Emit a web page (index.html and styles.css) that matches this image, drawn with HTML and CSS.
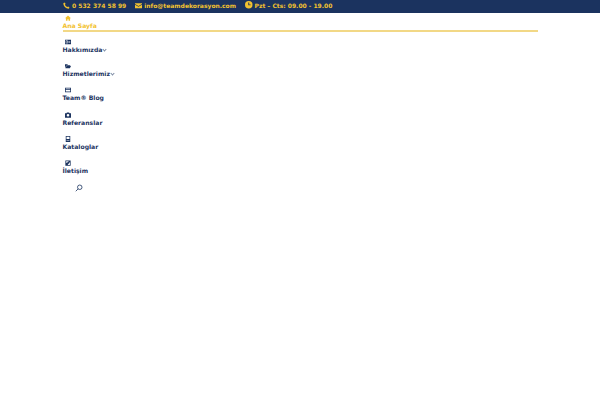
FILE: index.html
```html
<!DOCTYPE html>
<html lang="tr">
<head>
    <meta charset="UTF-8">
    <title>Team Dekorasyon</title>
    <link rel="stylesheet" href="styles.css">
</head>
<body>
    <!-- Top bar -->
    <div class="top-bar">
        <div class="container top-info">
            <span class="info-item">
                <svg class="info-icon" viewBox="0 0 16 16"><path d="M3 1l3 3-1.500 2.500c1 2 3 4 5 5L12 10l3 3-2 2.500C7 15.500 .5 9 .8 3z"/></svg>
                0 532 374 58 99
            </span>
            <span class="info-item">
                <svg class="info-icon" viewBox="0 0 16 16"><path d="M0 3h16v1.500L8 9 0 4.500z"/><path d="M0 6.500L8 11l8-4.500V14H0z"/></svg>
                info@teamdekorasyon.com
            </span>
            <span class="info-item">
                <svg class="info-icon clock" viewBox="0 0 16 16"><path fill-rule="evenodd" d="M8 0a8 8 0 1 1 0 16A8 8 0 0 1 8 0zM7 3v6h5V7.500H9V3z"/></svg>
                Pzt – Cts: 09.00 - 19.00
            </span>
        </div>
    </div>

    <!-- Main menu -->
    <nav class="container main-nav">
        <ul class="menu">
            <li class="menu-item active">
                <svg class="menu-icon" viewBox="0 0 16 16"><path d="M8 1L0 8.500h2.500V15h4v-4h3v4h4V8.500H16z"/></svg>
                <a href="#">Ana Sayfa</a>
            </li>
            <li class="menu-item">
                <svg class="menu-icon" viewBox="0 0 16 16"><path fill-rule="evenodd" d="M0 2h16v12H0zM2 4v8h5V4zm7 1v1.500h5V5zm0 3v1.500h5V8zM3 9.500h3V11H3zM3.500 5.500h2v3h-2z"/></svg>
                <a href="#">Hakkımızda</a><span class="caret"></span>
            </li>
            <li class="menu-item">
                <svg class="menu-icon" viewBox="0 0 16 16"><path d="M0 3h6l2 2h6v2H3L0 13zM4 8h12l-3 6H1z"/></svg>
                <a href="#">Hizmetlerimiz</a><span class="caret"></span>
            </li>
            <li class="menu-item">
                <svg class="menu-icon" viewBox="0 0 16 16"><path fill-rule="evenodd" d="M0 2h16v12H0zM2 4v1.500h12V4zm0 3.500V12h12V7.500z"/></svg>
                <a href="#">Team® Blog</a>
            </li>
            <li class="menu-item">
                <svg class="menu-icon" viewBox="0 0 16 16"><path fill-rule="evenodd" d="M5 1h6l1 2h4v12H0V3h4zm3 4a3.500 3.500 0 1 0 0 7 3.500 3.500 0 0 0 0-7z"/></svg>
                <a href="#">Referanslar</a>
            </li>
            <li class="menu-item">
                <svg class="menu-icon" viewBox="0 0 16 16"><path fill-rule="evenodd" d="M2 0h12v16H2zM4 2v6h8V2zm0 9v1.500h8V11z"/></svg>
                <a href="#">Kataloglar</a>
            </li>
            <li class="menu-item">
                <svg class="menu-icon" viewBox="0 0 16 16"><path fill-rule="evenodd" d="M1 1h14v14H1zM3 3v4h4l-1-1 5-3zm10 2L7 13h6z"/></svg>
                <a href="#">İletişim</a>
            </li>
        </ul>
        <button class="search-btn" aria-label="Ara">
            <svg viewBox="0 0 16 16"><circle cx="9.500" cy="6.500" r="4.500"/><path d="M6.300 9.700L1.500 14.500"/></svg>
        </button>
    </nav>
</body>
</html>
```

FILE: styles.css
```css
:root {
    --navy: #1b335f;
    --yellow: #f2c230;
}

body {
    margin: 0;
    background-color: #fff;
    font-family: "DejaVu Sans", sans-serif;
    font-size: 6.100px;
    font-weight: bold;
    color: var(--navy);
}

.container {
    width: 475px;
    margin: 0 auto;
}

.top-bar {
    height: 13px;
    background-color: var(--navy);
    color: var(--yellow);
}

.top-info {
    display: flex;
    align-items: center;
    gap: 9px;
    height: 10px;
    padding-left: 1px;
    font-size: 6px;
}

.info-item {
    display: flex;
    align-items: center;
    gap: 2px;
    white-space: nowrap;
}

.info-icon {
    width: 7px;
    height: 7px;
    fill: var(--yellow);
}

.clock {
    width: 7.500px;
    height: 7.500px;
}

.main-nav {
    padding-top: 2px;
}

.menu {
    list-style: none;
    margin: 0;
    padding: 0;
}

.menu-item {
    height: 24.200px;
    line-height: 7px;
}

.menu-item a {
    color: inherit;
    text-decoration: none;
}

.menu-icon {
    display: block;
    width: 6px;
    height: 6px;
    margin: 0 0 1px 2px;
    fill: var(--navy);
}

.active {
    height: 15px;
    margin-bottom: 7px;
    color: var(--yellow);
    border-bottom: 2px solid #f2d886;
}

.active .menu-icon {
    fill: var(--yellow);
}

.caret {
    display: inline-block;
    width: 2px;
    height: 2px;
    margin: 0 0 1px 1px;
    border-right: 1px solid #7d8aa3;
    border-bottom: 1px solid #7d8aa3;
    transform: rotate(45deg);
}

.search-btn {
    display: block;
    width: 8px;
    height: 8px;
    margin: 0 0 0 12px;
    padding: 0;
    border: 0;
    background: none;
}

.search-btn svg {
    display: block;
    fill: none;
    stroke: var(--navy);
    stroke-width: 1.600;
}
```
